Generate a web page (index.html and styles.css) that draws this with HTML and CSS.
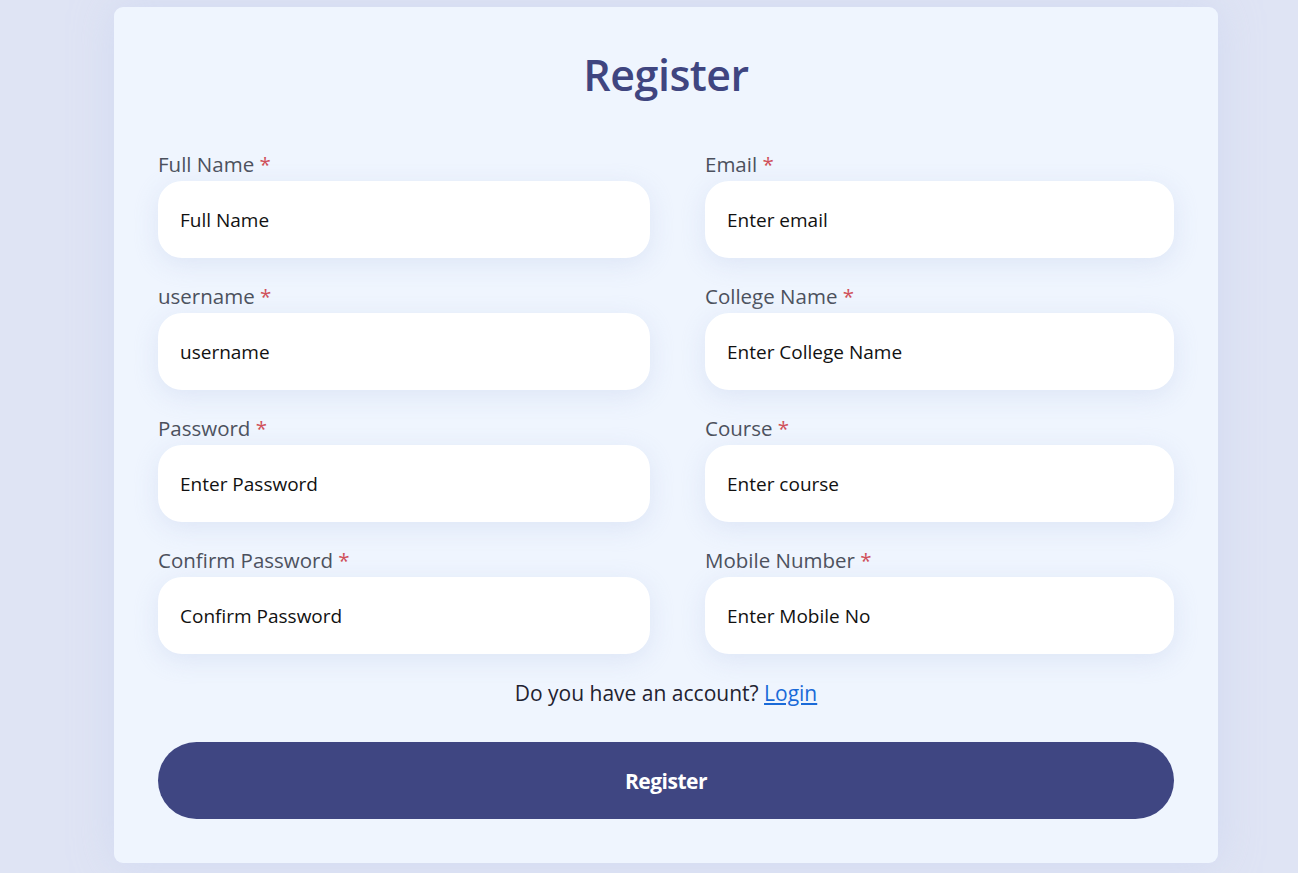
FILE: index.html
```html
<!DOCTYPE html>
<html lang="en">
<head>
<meta charset="utf-8">
<title>Register</title>
<link rel="stylesheet" href="styles.css">
</head>
<body>
<main class="card">
  <h1 class="title">Register</h1>
  <form class="grid">
    <div class="field"><label class="label">Full Name <span class="req">*</span></label><input class="input" placeholder="Full Name"></div>
    <div class="field"><label class="label">Email <span class="req">*</span></label><input class="input" placeholder="Enter email"></div>
    <div class="field"><label class="label">username <span class="req">*</span></label><input class="input" placeholder="username"></div>
    <div class="field"><label class="label">College Name <span class="req">*</span></label><input class="input" placeholder="Enter College Name"></div>
    <div class="field"><label class="label">Password <span class="req">*</span></label><input class="input" placeholder="Enter Password"></div>
    <div class="field"><label class="label">Course <span class="req">*</span></label><input class="input" placeholder="Enter course"></div>
    <div class="field"><label class="label">Confirm Password <span class="req">*</span></label><input class="input" placeholder="Confirm Password"></div>
    <div class="field"><label class="label">Mobile Number <span class="req">*</span></label><input class="input" placeholder="Enter Mobile No"></div>
  </form>
  <p class="account">Do you have an account? <a class="link" href="#">Login</a></p>
  <button class="btn" type="button">Register</button>
</main>
</body>
</html>
```
FILE: styles.css
```css
* { box-sizing: border-box; }
html, body { margin: 0; }
body {
  background: #dfe4f4;
  font-family: "Open Sans", "Noto Sans", sans-serif;
  padding: 7px 80px 10px 114px;
}
.card {
  width: 1104px;
  height: 856px;
  background: #eff5fe;
  border-radius: 9px;
  padding: 38px 44px 0 44px;
  box-shadow: 0 0 40px rgba(200, 210, 240, 0.6);
}
.title {
  margin: 0;
  text-align: center;
  font-size: 43px;
  font-weight: 600;
  color: #3f4580;
  line-height: 60px;
  letter-spacing: -0.5px;
}
.grid {
  display: grid;
  grid-template-columns: 492px 469px;
  column-gap: 55px;
  row-gap: 25px;
  margin-top: 46px;
}
.field { display: flex; flex-direction: column; }
.label {
  font-size: 20.5px;
  line-height: 26px;
  padding-bottom: 4px;
  color: #4b505c;
}
.req { color: #d0505a; }
.input {
  height: 77px;
  border: none;
  outline: none;
  border-radius: 24px;
  background: #fff;
  padding: 0 22px;
  font-family: inherit;
  font-size: 19px;
  color: #111;
  box-shadow: 0 6px 24px rgba(200, 210, 238, 0.45);
}
.input::placeholder { color: #111; opacity: 1; }
.account {
  margin: 20px 0 0;
  text-align: center;
  font-size: 21px;
  line-height: 38px;
  color: #1f2230;
}
.link { color: #1a6ad8; text-decoration: underline; }
.btn {
  display: block;
  width: 100%;
  height: 77px;
  margin-top: 30px;
  border: none;
  border-radius: 40px;
  background: #3f4682;
  color: #fff;
  font-family: inherit;
  font-size: 21px;
  font-weight: 700;
  letter-spacing: -0.5px;
}
```
